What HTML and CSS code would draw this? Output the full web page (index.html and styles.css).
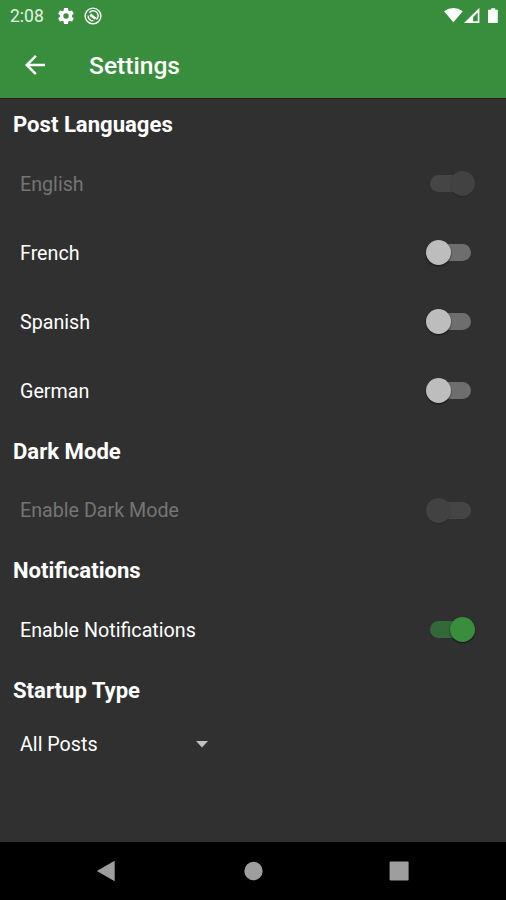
FILE: index.html
```html
<!DOCTYPE html>
<html lang="en">
<head>
    <meta charset="UTF-8">
    <meta name="viewport" content="width=device-width, initial-scale=1.0">
    <title>Settings</title>
    <link rel="stylesheet" href="styles.css">
</head>
<body>
    <header class="header">
        <div class="status-bar">
            <span class="time">2:08</span>
            <svg class="gear" width="20" height="20" viewBox="0 0 24 24"><path fill="#fff" d="M19.14 12.94c.04-.3.06-.61.06-.94 0-.32-.02-.64-.07-.94l2.03-1.58a.49.49 0 0 0 .12-.61l-1.92-3.32a.49.49 0 0 0-.59-.22l-2.39.96c-.5-.38-1.03-.7-1.62-.94l-.36-2.54a.48.48 0 0 0-.48-.41h-3.84a.47.47 0 0 0-.47.41l-.36 2.54c-.59.24-1.13.57-1.62.94l-2.39-.96a.48.48 0 0 0-.59.22L2.74 8.87a.47.47 0 0 0 .12.61l2.03 1.58c-.05.3-.09.63-.09.94s.02.64.07.94l-2.03 1.58a.49.49 0 0 0-.12.61l1.92 3.32c.12.22.37.29.59.22l2.39-.96c.5.38 1.03.7 1.62.94l.36 2.54c.05.24.24.41.48.41h3.84c.24 0 .44-.17.47-.41l.36-2.54c.59-.24 1.13-.56 1.62-.94l2.39.96c.22.08.47 0 .59-.22l1.92-3.32a.47.47 0 0 0-.12-.61zM12 15.2a3.2 3.2 0 1 1 0-6.4 3.2 3.2 0 0 1 0 6.4z"/></svg>
            <svg class="sync" width="18" height="18" viewBox="0 0 18 18" fill="none" stroke="#fff">
                <circle cx="9" cy="9" r="7.9" stroke-width="1.4"/>
                <path d="M5.4 5.6A4.9 4.9 0 1 1 12.4 12.4M4.2 8.6A4.8 4.8 0 0 0 9.4 13.8" stroke-width="1.5"/>
                <path d="M6.2 7.6l5.4 4.2" stroke-width="2.6"/>
            </svg>
            <svg class="signals" width="56" height="18" viewBox="0 0 56 18">
                <path fill="#fff" d="M0 3.2Q9.4-3.2 18.8 3.2L9.4 14.2z"/>
                <path fill="#fff" fill-rule="evenodd" d="M35.4-.2v15.2H20zM33.7 4.6l-4.6 4.6v4.1h4.6z"/>
                <path fill="#fff" d="M47.2.2h4v1.6h2.6v13.2h-9.8V1.8h3.2z"/>
            </svg>
        </div>
        <div class="app-bar">
            <svg class="back" width="30" height="30" viewBox="0 0 24 24"><path fill="#fff" d="M20 11H7.83l5.59-5.59L12 4l-8 8 8 8 1.41-1.41L7.83 13H20z"/></svg>
            <h1>Settings</h1>
        </div>
    </header>

    <main class="content">
        <h2>Post Languages</h2>
        <div class="row disabled"><span>English</span><i class="switch on"></i></div>
        <div class="row"><span>French</span><i class="switch"></i></div>
        <div class="row"><span>Spanish</span><i class="switch"></i></div>
        <div class="row"><span>German</span><i class="switch"></i></div>

        <h2>Dark Mode</h2>
        <div class="row disabled"><span>Enable Dark Mode</span><i class="switch"></i></div>

        <h2>Notifications</h2>
        <div class="row"><span>Enable Notifications</span><i class="switch on"></i></div>

        <h2>Startup Type</h2>
        <div class="dropdown">
            <span>All Posts</span>
            <svg width="12" height="7" viewBox="0 0 12 7"><path fill="#c1c1c1" d="M0 0h12L6 6.4z"/></svg>
        </div>
    </main>

    <!-- Android navigation -->
    <nav class="nav-bar">
        <svg width="506" height="58" viewBox="0 0 506 58" fill="#9e9e9e">
            <path d="M96.8 29L114.7 18.7v20.6z"/>
            <circle cx="253.5" cy="29" r="9.2"/>
            <rect x="389.6" y="19.6" width="19" height="19" rx="1"/>
        </svg>
    </nav>
</body>
</html>
```
FILE: styles.css
```css
body {
    margin: 0;
    height: 900px;
    display: flex;
    flex-direction: column;
    overflow: hidden;
    background-color: #303030;
    color: #fff;
    font-family: Roboto, sans-serif;
}

svg {
    display: block;
    flex: none;
}

.header {
    height: 98px;
    background-color: #388e3c;
    border-bottom: 1px solid #1d1f1d;
}

.status-bar {
    display: flex;
    align-items: center;
    height: 32px;
    padding: 0 6px 0 10px;
}

.time {
    width: 46px;
    font-size: 17.5px;
    color: #e6f2e6;
}

.sync {
    margin-left: 8px;
}

.signals {
    margin-left: auto;
    margin-top: 1px;
}

.app-bar {
    display: flex;
    align-items: center;
    height: 66px;
    padding-left: 20px;
}

h1 {
    margin: 1px 0 0 39px;
    font-size: 24.6px;
    font-weight: 500;
}

.content {
    flex: 1;
}

h2 {
    height: 50.5px;
    margin: 0;
    padding-left: 13px;
    font-size: 22.1px;
    font-weight: 700;
    line-height: 51.5px;
}

.row {
    display: flex;
    align-items: center;
    justify-content: space-between;
    height: 69px;
    padding: 0 35px 0 20px;
    font-size: 19.7px;
}

.disabled {
    color: #757575;
}

/* Track with the thumb overlapping one end */
.switch {
    position: relative;
    width: 41px;
    height: 17px;
    margin-bottom: 1px;
    border-radius: 9px;
    background-color: #6e6e6e;
}

.switch::after {
    content: "";
    position: absolute;
    top: -4px;
    left: -4px;
    width: 25px;
    height: 25px;
    border-radius: 50%;
    background-color: #bdbdbd;
    box-shadow: 0 1px 2px rgba(0, 0, 0, 0.6);
}

.switch.on {
    background-color: #33683a;
}

.switch.on::after {
    left: 20px;
    background-color: #388e3c;
}

.disabled .switch {
    background-color: #454545;
}

.disabled .switch::after {
    background-color: #424242;
    box-shadow: 0 1px 1px rgba(0, 0, 0, 0.15);
}

.dropdown {
    display: flex;
    align-items: center;
    justify-content: space-between;
    width: 188px;
    height: 59px;
    padding-left: 20px;
    font-size: 19.7px;
}

.nav-bar {
    height: 58px;
    background-color: #000;
}
```
